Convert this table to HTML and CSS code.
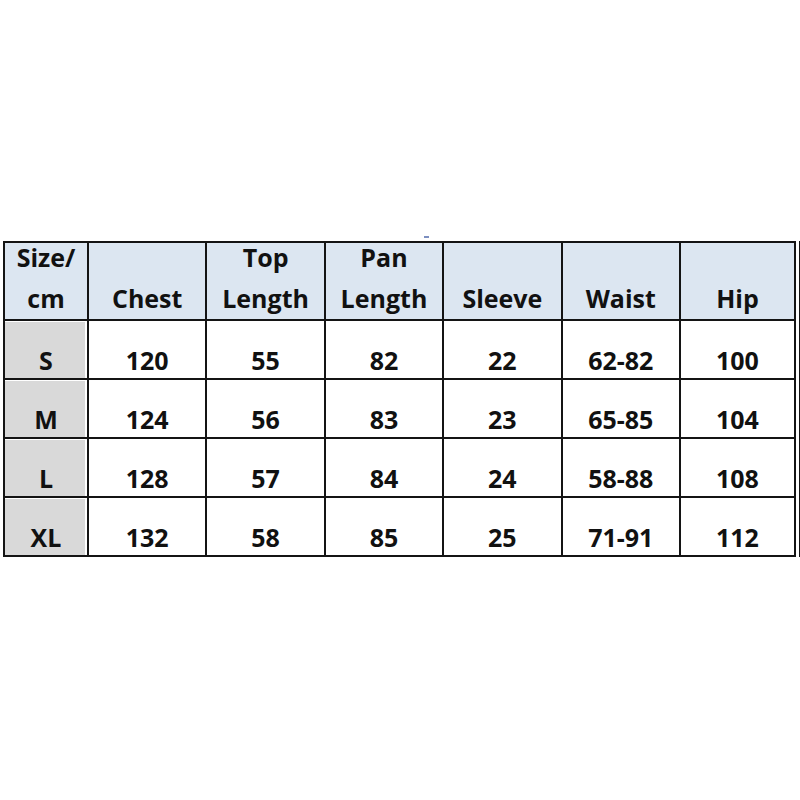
FILE: index.html
```html
<!DOCTYPE html>
<html>
<head>
<meta charset="utf-8">
<link rel="stylesheet" href="styles.css">
</head>
<body>
<div class="page">
  <span class="mark"></span>
  <div class="wrap">
    <table class="sizes">
      <colgroup>
        <col class="c-size"><col class="c-n"><col class="c-n"><col class="c-n"><col class="c-n"><col class="c-n"><col class="c-last">
      </colgroup>
      <thead>
        <tr>
          <th><div class="hd">Size/<br>cm</div></th>
          <th><div class="hd">Chest</div></th>
          <th><div class="hd">Top<br>Length</div></th>
          <th><div class="hd">Pan<br>Length</div></th>
          <th><div class="hd">Sleeve</div></th>
          <th><div class="hd">Waist</div></th>
          <th><div class="hd">Hip</div></th>
        </tr>
      </thead>
      <tbody>
        <tr><td class="sz">S</td><td>120</td><td>55</td><td>82</td><td>22</td><td>62-82</td><td>100</td></tr>
        <tr><td class="sz">M</td><td>124</td><td>56</td><td>83</td><td>23</td><td>65-85</td><td>104</td></tr>
        <tr><td class="sz">L</td><td>128</td><td>57</td><td>84</td><td>24</td><td>58-88</td><td>108</td></tr>
        <tr><td class="sz">XL</td><td>132</td><td>58</td><td>85</td><td>25</td><td>71-91</td><td>112</td></tr>
      </tbody>
    </table>
    <div class="edge"></div>
  </div>
</div>
</body>
</html>
```

FILE: styles.css
```css
html, body {
  margin: 0;
  padding: 0;
  background: #fff;
}
.page {
  position: relative;
  width: 800px;
  height: 800px;
  overflow: hidden;
  padding: 241px 0 0 3px;
  box-sizing: border-box;
  font-family: "Open Sans", "DejaVu Sans", sans-serif;
  font-weight: 700;
  color: #111;
}
.mark {
  position: absolute;
  left: 424px;
  top: 236px;
  width: 5px;
  height: 2px;
  background: #7c8fc0;
}
.wrap {
  display: flex;
  align-items: stretch;
}
.sizes {
  border-collapse: collapse;
  table-layout: fixed;
  width: 791px;
  font-size: 25px;
}
.c-size { width: 84px; }
.c-n { width: 118.4px; }
.c-last { width: 115px; }
.sizes th, .sizes td {
  border: 2px solid #141414;
  text-align: center;
  padding: 0;
}
.sizes th {
  background: #dce6f1;
  height: 76px;
  vertical-align: bottom;
  font-weight: 700;
}
.hd {
  line-height: 41px;
  margin-top: -6px;
  padding-bottom: 0;
}
.sizes td {
  height: 59px;
  vertical-align: bottom;
  line-height: 30px;
  padding-bottom: 3px;
  box-sizing: border-box;
}
.sizes td.sz {
  background: #d9d9d9;
  box-shadow: inset -2px 0 0 #fff, inset 0 1px 0 #fff;
}
.edge {
  width: 2px;
  margin-left: 3px;
  border-left: 2px solid #141414;
}
```
